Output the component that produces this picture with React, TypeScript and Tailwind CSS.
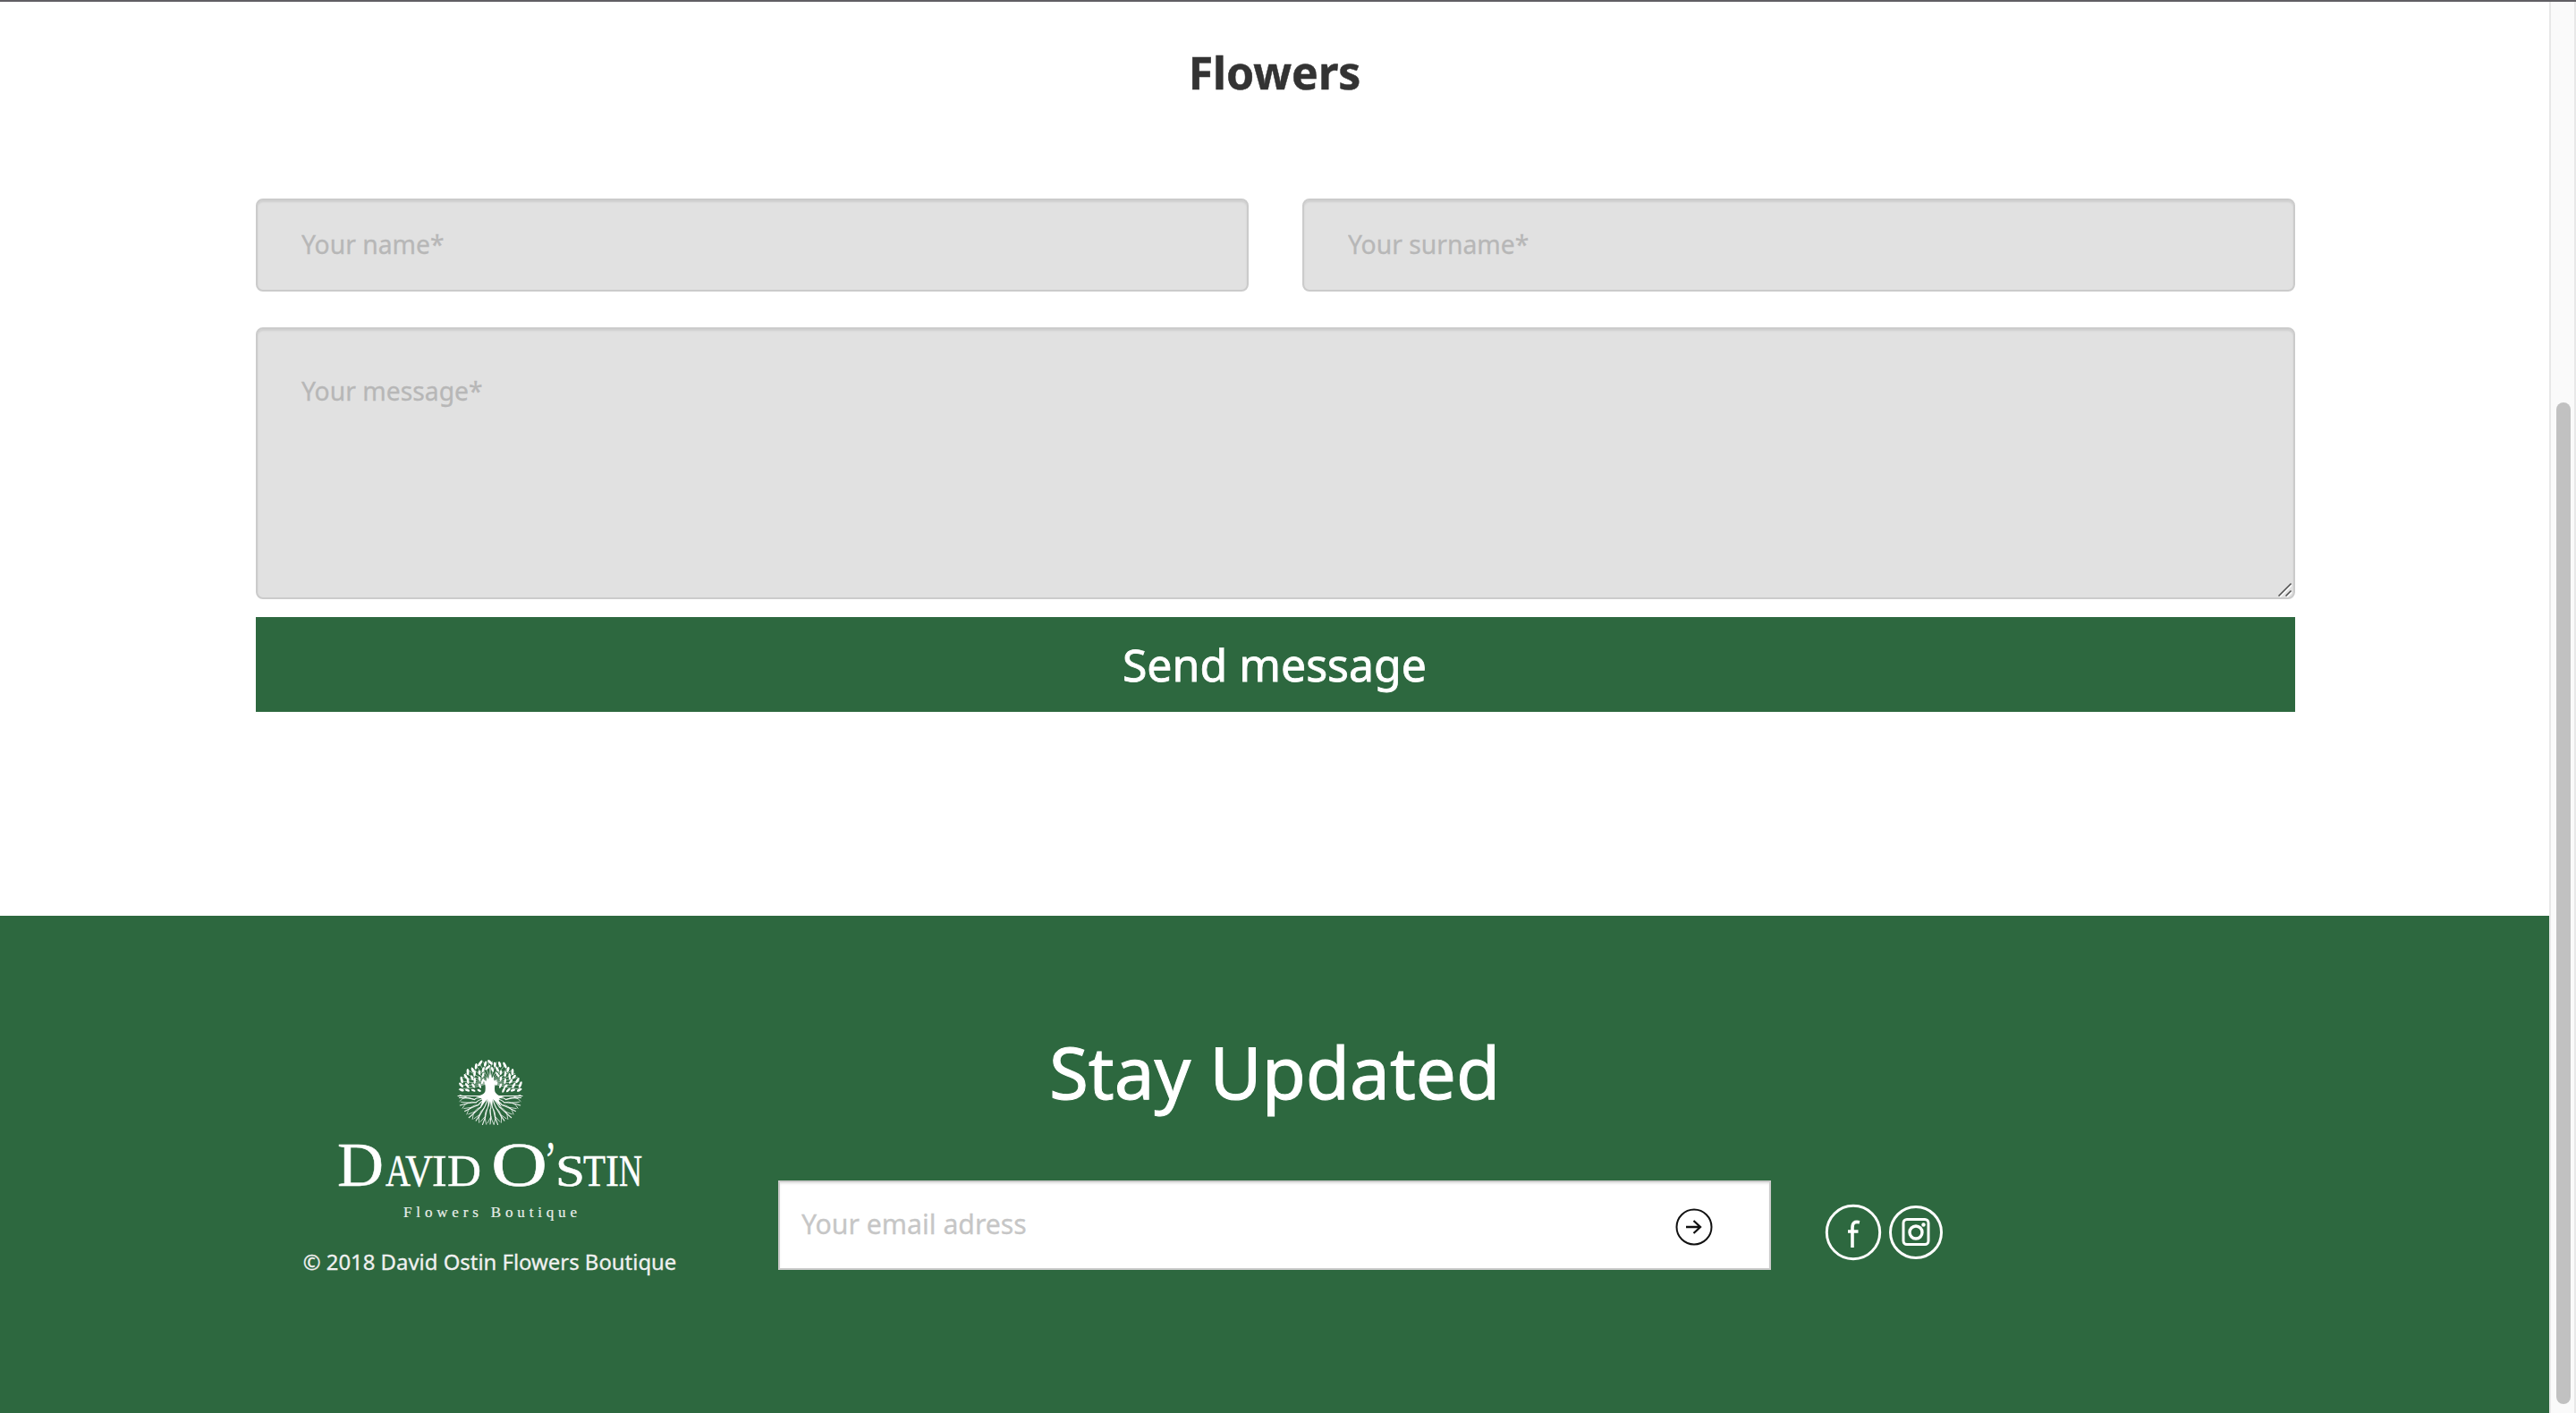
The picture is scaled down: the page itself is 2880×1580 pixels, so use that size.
import React from "react";

const polar = (r: number, a: number): [number, number] => {
  const t = (a * Math.PI) / 180;
  return [37 + r * Math.cos(t), 37 + r * Math.sin(t)];
};

const branches = (() => {
  const out: { d: string; w: number }[] = [];
  // Roots fan out below the ground line, each one forking twice.
  for (let i = 0; i < 13; i++) {
    const a = 9 + i * 13.5;
    const side = a < 90 ? 1 : -1;
    const [mx, my] = polar(19, 90 + (a - 90) * 0.82);
    const [ex, ey] = polar(i % 2 ? 36.5 : 35, a);
    const [fx, fy] = polar(35.5, a + 6.5 * side);
    const [gx, gy] = polar(34, a - 5 * side);
    const [kx, ky] = polar(27, a + 1.5 * side);
    out.push({ d: `M${37 + (mx - 37) * 0.35} 43Q${mx - side * 2} ${my - 3} ${mx} ${my}Q${kx - side} ${ky} ${ex} ${ey}`, w: 1.1 });
    out.push({ d: `M${mx} ${my}Q${kx + side * 2} ${ky - 3} ${fx} ${fy}`, w: 0.8 });
    out.push({ d: `M${kx} ${ky}L${gx} ${gy}`, w: 0.8 });
  }
  // Crown twigs.
  for (let a = 186; a <= 354; a += 8) {
    const [ex, ey] = polar(35, a);
    const [mx, my] = polar(18, a + (a < 270 ? 12 : -12));
    out.push({ d: `M37 26Q${mx} ${my} ${ex} ${ey}`, w: 0.6 });
  }
  return out;
})();

const leaves = (() => {
  const out: { x: number; y: number; rx: number; ry: number; r: number }[] = [];
  const rings = [
    { r: 33.5, n: 19, rx: 3.4, ry: 1.4 },
    { r: 27, n: 16, rx: 3.2, ry: 1.3 },
    { r: 20.5, n: 12, rx: 3, ry: 1.2 },
    { r: 14, n: 8, rx: 2.8, ry: 1.2 },
  ];
  rings.forEach((ring, k) => {
    for (let i = 0; i < ring.n; i++) {
      const a = 181 + (178 * (i + 0.5)) / ring.n;
      if (Math.abs(a - 270) < 10 && k > 1) continue;
      const wobble = ((i * 7 + k * 5) % 5) - 2;
      const [x, y] = polar(ring.r + wobble * 0.7, a);
      out.push({
        x,
        y,
        rx: ring.rx + wobble * 0.25,
        ry: ring.ry,
        r: a + (a < 270 ? 1 : -1) * (wobble * 10 + 34),
      });
    }
  });
  return out;
})();

function TreeMark() {
  return (
    <svg className="h-[76px] w-[76px]" viewBox="-1 -2 76 76" fill="none" stroke="white" strokeLinecap="round">
      {branches.map((b, i) => (
        <path key={i} d={b.d} strokeWidth={b.w} opacity="0.9" />
      ))}
      {leaves.map((l, i) => (
        <ellipse key={i} cx={l.x} cy={l.y} rx={l.rx} ry={l.ry} transform={`rotate(${l.r} ${l.x} ${l.y})`} fill="white" stroke="none" />
      ))}
      <path d="M1 40.5H30M44 40.5H73" strokeWidth="1" />
      <path
        d="M37 15L39 21L41 18V24L45 22C42 27 41.500 32 42.500 36C44 39 48 41 53 42C48 42 46 43 47 47L50 54L44 47L40 44L39 52L37 46L35.500 53L34 44L30 48L25 55L28 47C29 43 26 42 21 41C27 40 31 38 31.500 35C32 31 32 27 29 22L33 24V19L35 22Z"
        fill="white"
        stroke="none"
      />
    </svg>
  );
}

function Wordmark() {
  return (
    <svg className="-mt-[20px] h-[100px] w-[354px]" viewBox="-2 -20 354 100" fill="white" stroke="white" strokeWidth="0.5" fontFamily='"Liberation Serif", serif'>
      <text y="52" fontSize="50">
        <tspan x="4" fontSize="70" textLength="52" lengthAdjust="spacingAndGlyphs">D</tspan>
        <tspan x="58" textLength="28" lengthAdjust="spacingAndGlyphs">A</tspan>
        <tspan x="80" textLength="31" lengthAdjust="spacingAndGlyphs">V</tspan>
        <tspan x="110">I</tspan>
        <tspan x="127" textLength="38" lengthAdjust="spacingAndGlyphs">D</tspan>
        <tspan x="176" fontSize="70" textLength="63" lengthAdjust="spacingAndGlyphs">O</tspan>
        <tspan x="236" y="42" fontSize="56" textLength="13" lengthAdjust="spacingAndGlyphs">’</tspan>
        <tspan x="248" y="52" textLength="33" lengthAdjust="spacingAndGlyphs">S</tspan>
        <tspan x="279" textLength="25" lengthAdjust="spacingAndGlyphs">T</tspan>
        <tspan x="304" textLength="15" lengthAdjust="spacingAndGlyphs">I</tspan>
        <tspan x="319" textLength="26" lengthAdjust="spacingAndGlyphs">N</tspan>
      </text>
    </svg>
  );
}

const field =
  "block rounded-[8px] border-2 border-[#cbcbcb] bg-[#e1e1e1] pr-[48px] pl-[49px] text-[28.3px] text-gray-700 placeholder:text-[#b7b7b7] placeholder:opacity-100 shadow-[inset_0_2px_2px_rgba(0,0,0,0.08)] outline-none [-webkit-text-stroke:0.3px]";

export default function App() {
  return (
    <div className="flex h-[1580px] w-[2880px] flex-col overflow-hidden bg-white font-['Noto_Sans',sans-serif]">
      <div className="h-[2px] shrink-0 bg-[#615f64]" />
      <div className="flex min-h-0 flex-1">
        <div className="flex w-[2850px] flex-col">
          <main className="flex h-[1022px] flex-col px-[286px] pt-[45px]">
            <h1 className="h-[175px] text-center text-[50px] leading-[68px] font-bold text-[#333] [-webkit-text-stroke:0.5px]">Flowers</h1>
            <form className="flex w-[2280px] flex-col">
              <div className="flex gap-[60px]">
                <input className={`${field} h-[104px] w-[1110px] pb-[3px]`} placeholder="Your name*" />
                <input className={`${field} h-[104px] w-[1110px] pb-[3px]`} placeholder="Your surname*" />
              </div>
              <div className="relative mt-[40px]">
                <textarea className={`${field} h-[304px] w-full resize-none pt-[49px] leading-[40px]`} placeholder="Your message*" />
                <svg className="absolute right-[3px] bottom-[2px] h-[17px] w-[17px]" viewBox="0 0 17 17" fill="none" strokeWidth="1.500">
                  <path d="M3 16.500L16 3.500M11 16.500L16 11.500" stroke="white" />
                  <path d="M1.500 15.500L15.500 1.500M9.500 15.500L15.500 9.500" stroke="#4d4d4d" />
                </svg>
              </div>
              <button type="button" className="mt-[20px] h-[106px] bg-[#2d683f] pr-[2px] text-[50px] leading-[105px] text-white [-webkit-text-stroke:0.8px]">
                Send message
              </button>
            </form>
          </main>
          <footer className="flex flex-1 bg-[#2d683f] pl-[336px] text-white">
            <div className="flex w-[424px] flex-col items-center pt-[159px]">
              <TreeMark />
              <div className="mt-[15px] h-[60px]">
                <Wordmark />
              </div>
              <svg className="mt-[6px] h-[36px] w-[200px]" viewBox="0 0 200 36" fill="#e8eee9">
                <text x="3" y="21" fontFamily='"Liberation Serif", serif' fontSize="17" textLength="194" stroke="#e8eee9" strokeWidth="0.2">
                  Flowers Boutique
                </text>
              </svg>
              <p className="mt-[15px] pr-[1px] text-[23.900px] leading-[40px] whitespace-nowrap text-[#f0f0f0] [-webkit-text-stroke:0.3px]">© 2018 David Ostin Flowers Boutique</p>
            </div>
            <div className="ml-[110px] flex w-[1110px] flex-col pt-[118px]">
              <h2 className="h-[178px] text-center text-[80px] leading-[112px] [-webkit-text-stroke:1px]">Stay Updated</h2>
              <div className="flex h-[100px] items-center border-2 border-[#cbcbcb] bg-white pr-[63px] pl-[24px] shadow-[inset_0_2px_2px_rgba(0,0,0,0.08)]">
                <input className="h-full flex-1 bg-transparent pb-[4px] text-[30.200px] text-gray-700 outline-none [-webkit-text-stroke:0.3px] placeholder:text-[#c6c6c6] placeholder:opacity-100" placeholder="Your email adress" />
                <svg className="mt-[4px] h-[42px] w-[42px]" viewBox="0 0 42 42" fill="none" stroke="#111" strokeWidth="2">
                  <circle cx="21" cy="21" r="19.500" />
                  <path d="M12 21H28M20.500 14L28 21L20.500 28" strokeWidth="2.300" />
                </svg>
              </div>
            </div>
            <div className="flex gap-[8px] pt-[322px] pl-[60px]">
              <svg className="h-[64px] w-[64px]" viewBox="0 0 64 64" fill="none" stroke="white">
                <circle cx="32" cy="32" r="29.700" strokeWidth="3" />
                <path d="M39 20.700C33 19.500 31 21.500 31 27V49M26 31H37.500" strokeWidth="3.600" />
              </svg>
              <svg className="h-[64px] w-[64px]" viewBox="0 0 64 64" fill="none" stroke="white" strokeWidth="3">
                <circle cx="30" cy="32" r="28.500" />
                <rect x="16" y="17.500" width="28" height="28" rx="4" />
                <circle cx="30" cy="32" r="7" strokeWidth="3.400" />
                <circle cx="38.500" cy="23.500" r="2.200" fill="white" stroke="none" />
              </svg>
            </div>
          </footer>
        </div>
        <div className="w-[30px] border-x-2 border-[#e8e8e8] bg-[#fafafa] pt-[448px] pl-[6px]">
          <div className="h-[1120px] w-[16px] rounded-full bg-[#c1c1c1]" />
        </div>
      </div>
    </div>
  );
}
